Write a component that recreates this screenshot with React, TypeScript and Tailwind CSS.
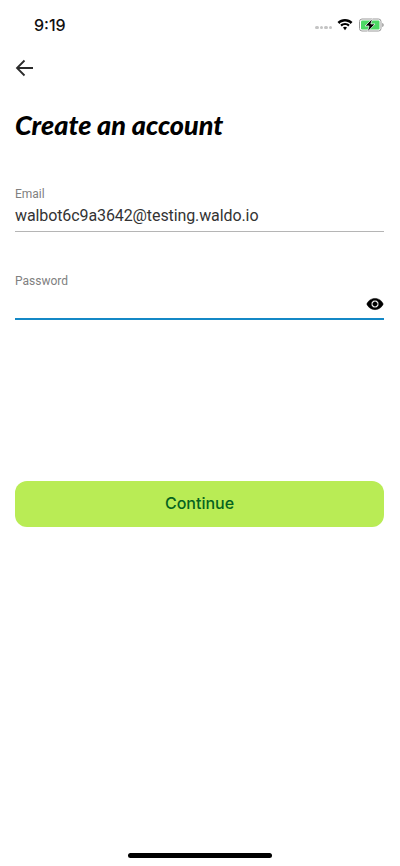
import React from 'react';

const StatusBar: React.FC = () => (
  <div className="h-[48px] flex items-center justify-between pl-[34px] pr-[16px] pt-[2px]">
    <span className="text-[16px] font-medium text-[#111] font-['Inter',sans-serif]">9:19</span>
    <div className="flex items-center">
      <div className="flex gap-[1px] mr-[5px] mt-[5px]">
        <span className="w-[3.5px] h-[3.5px] rounded-full bg-[#c4c4c4]" />
        <span className="w-[3.5px] h-[3.5px] rounded-full bg-[#c4c4c4]" />
        <span className="w-[3.5px] h-[3.5px] rounded-full bg-[#c4c4c4]" />
        <span className="w-[3.5px] h-[3.5px] rounded-full bg-[#c4c4c4]" />
      </div>
      <svg width="16" height="12" viewBox="0 0 16 12" className="mr-[6px] -mt-[1px]">
        <path d="M8 2.600c2.200 0 4.200.9 5.600 2.300l1.900-1.900C13.600 1.100 10.900 0 8 0S2.400 1.100.5 3l1.900 1.900C3.800 3.500 5.800 2.600 8 2.600z" fill="#000" />
        <path d="M8 6.100c1.200 0 2.300.5 3.200 1.300l1.500-1.600C11.400 4.600 9.800 3.900 8 3.900s-3.400.7-4.700 1.900l1.500 1.600C5.700 6.600 6.800 6.100 8 6.100z" fill="#000" />
        <path d="M8 7.700c-.8 0-1.500.3-2 .8L8 11.200l2-2.700c-.5-.5-1.200-.8-2-.8z" fill="#000" />
      </svg>
      <svg width="25" height="14" viewBox="0 0 25 14">
        <rect x="0.500" y="1" width="21.500" height="12" rx="2.500" fill="none" stroke="#9a9a9a" />
        <rect x="2" y="2.500" width="18.500" height="9" rx="1.200" fill="#4cd964" />
        <path d="M23.200 5c1 .3 1.500 1.100 1.500 2s-.5 1.700-1.500 2z" fill="#9a9a9a" />
        <path d="M13.500 0.500 6 8h4l-1.500 5.800L16 6h-4.200z" fill="#000" stroke="#fff" strokeWidth="0.700" />
      </svg>
    </div>
  </div>
);

const App: React.FC = () => {
  return (
    <div className="relative w-[400px] h-[866px] bg-white overflow-hidden flex flex-col font-['Roboto',sans-serif]">
      <StatusBar />
      <main className="flex-1 flex flex-col pl-[15px] pr-[16px]">
        <button className="h-[40px] w-[24px] flex items-center text-[#2b2b2b]">
          <svg width="20" height="18" viewBox="0 0 20 18" fill="none" stroke="currentColor" strokeWidth="1.800">
            <path d="M18 9H2M9.500 1.500 2 9l7.500 7.500" />
          </svg>
        </button>

        <h1 className="mt-[19px] text-[27px] leading-[36px] font-black italic text-black font-['Lato',sans-serif]">
          Create an account
        </h1>

        <div className="mt-[43px] h-[46px] border-b border-[#b5b5b5] flex flex-col">
          <label className="text-[12px] leading-[16px] text-[#808080]">Email</label>
          <div className="mt-[2px] text-[16px] leading-[24px] text-[#333] tracking-[-0.1px]">walbot6c9a3642@testing.waldo.io</div>
        </div>

        <div className="mt-[41px] h-[47px] border-b-2 border-[#1488c6] flex flex-col">
          <label className="text-[12px] leading-[16px] text-[#808080]">Password</label>
          <div className="flex-1 flex items-center justify-end">
            <svg width="18" height="18" viewBox="0 0 24 24" fill="#000" stroke="#000" strokeWidth="0.600" className="mt-[1px]">
              <path d="M12 4.500C7 4.500 2.730 7.610 1 12c1.730 4.390 6 7.500 11 7.500s9.270-3.110 11-7.500c-1.730-4.390-6-7.500-11-7.500zM12 17c-2.760 0-5-2.240-5-5s2.240-5 5-5 5 2.240 5 5-2.240 5-5 5zm0-8c-1.660 0-3 1.340-3 3s1.340 3 3 3 3-1.340 3-3-1.340-3-3-3z" />
            </svg>
          </div>
        </div>

        <button className="mt-[161px] h-[46px] pb-[3px] rounded-[12px] bg-[#b9ec55] text-[#05631f] text-[16px] font-medium font-['Inter',sans-serif] flex items-center justify-center">
          Continue
        </button>
      </main>

      <div className="h-[13px] flex justify-center">
        <div className="w-[144px] h-[5px] rounded-full bg-black" />
      </div>
    </div>
  );
};

export default App;
